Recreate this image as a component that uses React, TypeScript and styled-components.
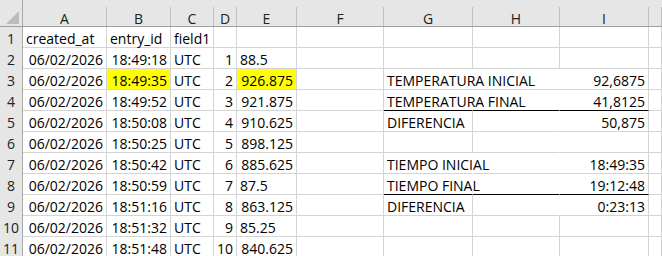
import React from 'react'
import styled, { createGlobalStyle } from 'styled-components'

const GlobalStyle = createGlobalStyle`
  html, body {
    margin: 0;
    padding: 0;
    background: #fff;
  }
  body {
    font-family: "Open Sans", "Liberation Sans", sans-serif;
    font-size: 14px;
    color: #000;
  }
`

const COLUMNS = '23px 84px 64px 43px 23px 60px 87px 89px 87px 89px 1fr'
const LETTERS = ['A', 'B', 'C', 'D', 'E', 'F', 'G', 'H', 'I', '']

const Sheet = styled.div`
  width: 662px;
  height: 256px;
  overflow: hidden;
  background: #fff;
`

const HeaderRow = styled.div`
  display: grid;
  grid-template-columns: ${COLUMNS};
  height: 27px;
  padding-top: 7px;
  box-sizing: border-box;
  background: #e6e6e6;
  border-bottom: 1px solid #9e9e9e;
`

const Corner = styled.div`
  margin-top: -7px;
  border-right: 1px solid #a8a8a8;
  display: flex;
  align-items: flex-end;
  justify-content: flex-end;
  padding: 0 3px 2px 0;
`

const Triangle = styled.svg`
  display: block;
`

const ColLetter = styled.div`
  height: 19px;
  box-sizing: border-box;
  padding-top: 2px;
  line-height: 19px;
  text-align: center;
  color: #222;
  border-right: 1px solid #bfbfbf;
`

const Row = styled.div`
  display: grid;
  grid-template-columns: ${COLUMNS};
  height: 21px;
`

const RowNumber = styled.div`
  background: #e6e6e6;
  border-right: 1px solid #a8a8a8;
  border-bottom: 1px solid #c8c8c8;
  box-sizing: border-box;
  padding-top: 2px;
  line-height: 20px;
  text-align: center;
  color: #222;
`

const Cell = styled.div<{ $align?: string; $fill?: string; $noRight?: boolean; $line?: boolean }>`
  box-sizing: border-box;
  height: 21px;
  padding: 2px 3px 0 3px;
  line-height: 20px;
  white-space: nowrap;
  text-align: ${p => p.$align || 'left'};
  background: ${p => p.$fill || 'transparent'};
  border-right: 1px solid ${p => (p.$noRight ? 'transparent' : '#d4d4d4')};
  border-bottom: 1px solid ${p => (p.$line ? '#000' : '#d4d4d4')};
  overflow: visible;
`

type CellData = { v?: string; r?: boolean; y?: boolean; open?: boolean; line?: boolean }

const txt = (v: string): CellData => ({ v })
const num = (v: string): CellData => ({ v, r: true })

// G, H, I columns of the summary block
const summary: Record<number, [CellData, CellData, CellData]> = {
  3: [{ v: 'TEMPERATURA INICIAL', open: true }, { open: true }, num('92,6875')],
  4: [{ v: 'TEMPERATURA FINAL', open: true, line: true }, { open: true, line: true }, { v: '41,8125', r: true, line: true }],
  5: [txt('DIFERENCIA'), { open: true }, num('50,875')],
  6: [{}, { open: true }, {}],
  7: [{ v: 'TIEMPO INICIAL', open: true }, { open: true }, num('18:49:35')],
  8: [{ v: 'TIEMPO FINAL', open: true, line: true }, { open: true, line: true }, { v: '19:12:48', r: true, line: true }],
  9: [txt('DIFERENCIA'), { open: true }, num('0:23:13')],
}

const log: [string, CellData][] = [
  ['18:49:18', txt('88.5')],
  ['18:49:35', { v: '926.875', r: true, y: true }],
  ['18:49:52', num('921.875')],
  ['18:50:08', num('910.625')],
  ['18:50:25', num('898.125')],
  ['18:50:42', num('885.625')],
  ['18:50:59', txt('87.5')],
  ['18:51:16', num('863.125')],
  ['18:51:32', txt('85.25')],
  ['18:51:48', num('840.625')],
]

const buildRows = (): CellData[][] => {
  const rows: CellData[][] = []
  rows.push([txt('created_at'), txt('entry_id'), txt('field1'), {}, {}, {}, {}, {}, {}, {}])
  log.forEach(([time, value], i) => {
    const n = i + 2
    const extra = summary[n] || [{}, {}, {}]
    rows.push([
      num('06/02/2026'),
      { v: time, r: true, y: n === 3 },
      txt('UTC'),
      num(String(i + 1)),
      value,
      {},
      ...extra,
      {},
    ])
  })
  return rows
}

const App = () => {
  const rows = buildRows()

  return (
    <>
      <GlobalStyle />
      <Sheet>
        <HeaderRow>
          <Corner>
            <Triangle width="13" height="13" viewBox="0 0 13 13">
              <polygon points="0,13 13,13 13,0" fill="#bcbcbc" />
            </Triangle>
          </Corner>
          {LETTERS.map((l, i) => (
            <ColLetter key={i}>{l}</ColLetter>
          ))}
        </HeaderRow>

        {rows.map((cells, ri) => (
          <Row key={ri}>
            <RowNumber>{ri + 1}</RowNumber>
            {cells.map((c, ci) => (
              <Cell
                key={ci}
                $align={c.r ? 'right' : 'left'}
                $fill={c.y ? '#ffff00' : undefined}
                $noRight={c.open}
                $line={c.line}
              >
                {c.v}
              </Cell>
            ))}
          </Row>
        ))}
      </Sheet>
    </>
  )
}

export default App
